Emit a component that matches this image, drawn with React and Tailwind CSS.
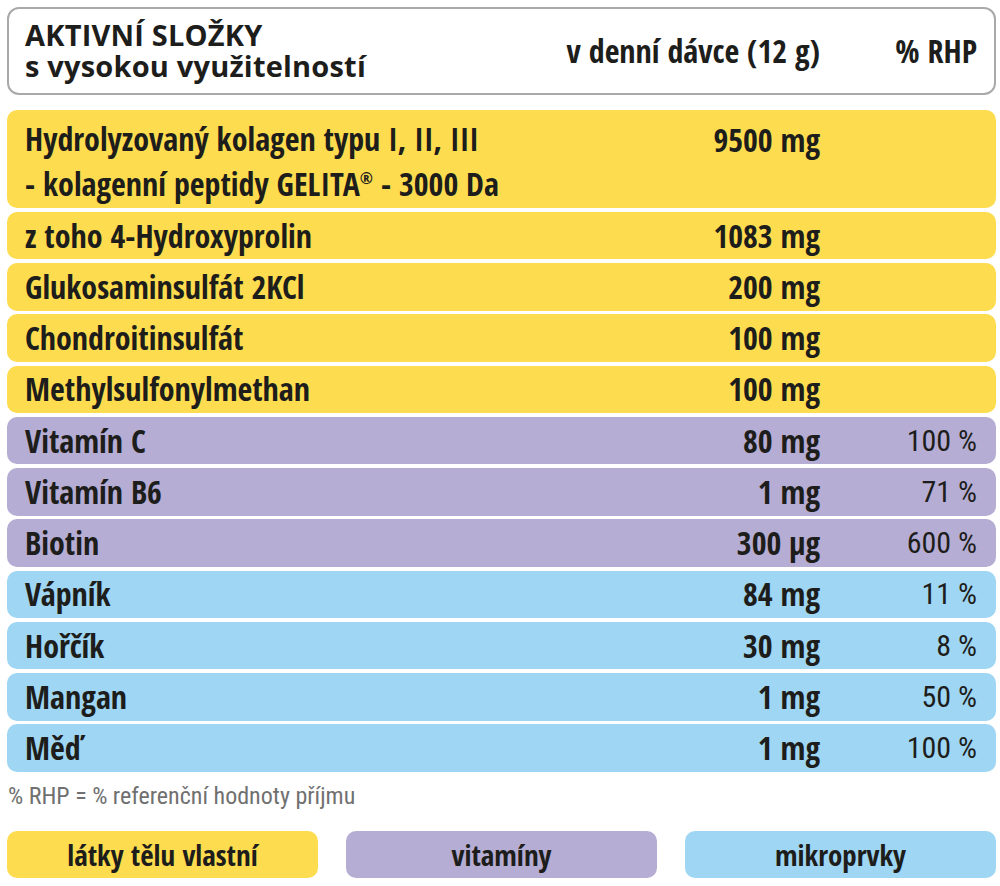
const YELLOW = 'bg-[#fddc4f]';
const PURPLE = 'bg-[#b5add4]';
const BLUE = 'bg-[#9fd6f3]';

const rows = [
  { name: 'z toho 4-Hydroxyprolin', value: '1083 mg', pct: '', bg: YELLOW },
  { name: 'Glukosaminsulfát 2KCl', value: '200 mg', pct: '', bg: YELLOW },
  { name: 'Chondroitinsulfát', value: '100 mg', pct: '', bg: YELLOW },
  { name: 'Methylsulfonylmethan', value: '100 mg', pct: '', bg: YELLOW },
  { name: 'Vitamín C', value: '80 mg', pct: '100 %', bg: PURPLE },
  { name: 'Vitamín B6', value: '1 mg', pct: '71 %', bg: PURPLE },
  { name: 'Biotin', value: '300 µg', pct: '600 %', bg: PURPLE },
  { name: 'Vápník', value: '84 mg', pct: '11 %', bg: BLUE },
  { name: 'Hořčík', value: '30 mg', pct: '8 %', bg: BLUE },
  { name: 'Mangan', value: '1 mg', pct: '50 %', bg: BLUE },
  { name: 'Měď', value: '1 mg', pct: '100 %', bg: BLUE },
];

const legend = [
  { label: 'látky tělu vlastní', bg: YELLOW },
  { label: 'vitamíny', bg: PURPLE },
  { label: 'mikroprvky', bg: BLUE },
];

function Row({ name, value, pct, bg }) {
  return (
    <div className={`${bg} h-[47.5px] rounded-[10px] flex items-center pl-[18px] pr-[19px]`}>
      <div className="flex-1 font-bold">{name}</div>
      <div className="font-bold text-right">{value}</div>
      <div className="w-[157px] text-right font-['Roboto_Condensed',sans-serif] font-normal text-[30px]">{pct}</div>
    </div>
  );
}

export default function App() {
  return (
    <div className="w-[1000px] h-[886px] bg-white pt-[7px] pl-[7px] pr-[4px] text-[#1d1d1b] font-['Open_Sans_Condensed','Roboto_Condensed',sans-serif] text-[32px] leading-none">
      {/* Header */}
      <div className="h-[88px] border-[2.5px] border-[#a9a9a9] rounded-[12px] flex items-center pl-[16px] pr-[17px]">
        <div className="flex-1 font-['Open_Sans',sans-serif] font-bold text-[29px] leading-[31px] tracking-[0.2px] -mt-[3px]">
          <div>AKTIVNÍ SLOŽKY</div>
          <div>s vysokou využitelností</div>
        </div>
        <div className="font-bold text-right">v denní dávce (12 g)</div>
        <div className="w-[157px] text-right font-bold">% RHP</div>
      </div>

      {/* Table */}
      <div className="mt-[15px] flex flex-col gap-[3.75px]">
        <div className={`${YELLOW} h-[98px] rounded-[10px] flex items-start pl-[18px] pr-[19px] pt-[14px]`}>
          <div className="flex-1 font-bold leading-[45px] -mt-[8px]">
            <div>Hydrolyzovaný kolagen typu I, II, III</div>
            <div>
              - kolagenní peptidy GELITA<sup className="text-[16px] -top-[12px]">®</sup> - 3000 Da
            </div>
          </div>
          <div className="font-bold text-right">9500 mg</div>
          <div className="w-[157px]" />
        </div>
        {rows.map((r) => (
          <Row key={r.name} {...r} />
        ))}
      </div>

      {/* Footnote */}
      <div className="mt-[12px] pl-[1px] font-['Roboto_Condensed',sans-serif] font-normal text-[24px] text-[#707070]">
        % RHP = % referenční hodnoty příjmu
      </div>

      {/* Legend */}
      <div className="mt-[23px] grid grid-cols-3 gap-[28px]">
        {legend.map((l) => (
          <div
            key={l.label}
            className={`${l.bg} h-[47px] rounded-[10px] flex items-center justify-center font-bold text-[29px]`}
          >
            {l.label}
          </div>
        ))}
      </div>
    </div>
  );
}
